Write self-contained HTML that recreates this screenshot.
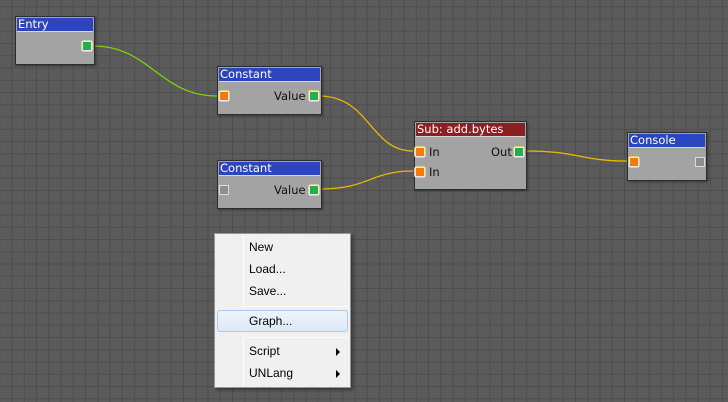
<!DOCTYPE html>
<html><head><meta charset="utf-8"><style>
*{margin:0;padding:0;box-sizing:border-box}
body{width:728px;height:402px;overflow:hidden;position:relative;font-family:"DejaVu Sans","Liberation Sans",sans-serif;
background-color:#5b5b5b;
background-image:linear-gradient(90deg,#4e4e4e 1px,transparent 1px),linear-gradient(#4e4e4e 1px,transparent 1px);
background-size:12.25px 12.25px;background-position:11.5px 6.25px}
.node{position:absolute;background:#a3a3a3;border:1px solid #2e2e2e;box-shadow:1px 1px 2px rgba(0,0,0,.4)}
.t{height:14px;margin:1px 1px 0 1px;color:#fff;font-size:11.5px;line-height:13px;padding-left:1px;border-bottom:1px solid #d8d8d8;background:#2b45bf}
.t.r{background:#8c1f22}
.p{position:absolute;width:12px;height:12px;border-radius:3px;background:#c9dca0}
.p i{position:absolute;left:1px;top:1px;width:10px;height:10px;border:1px solid #e8e8e8;background:#22b04a}
.p.o i{background:#f47a0a}.p.y{background:#e2cf8f}.p.g{background:none}.p.g i{background:#8e8e8e;border-color:#ddd}
.l{position:absolute;font-size:11.5px;color:#111}
.menu{position:absolute;left:214px;top:233px;width:137px;height:155px;background:#f0f0f0;border:1px solid #979797;box-shadow:2px 2px 3px rgba(0,0,0,.4);font-family:"Liberation Sans","DejaVu Sans",sans-serif;font-size:12px;color:#000}
.menu .vl{position:absolute;left:28px;top:2px;bottom:2px;width:1px;background:#e2e2e2;border-right:1px solid #fff}
.mi{position:absolute;left:34px}
.sep{position:absolute;left:30px;right:2px;height:1px;background:#d7d7d7;border-bottom:1px solid #fff}
.hl{position:absolute;left:2px;right:2px;top:76px;height:22px;border:1px solid #aecbed;border-radius:3px;background:linear-gradient(#eef4fb,#dde9f7)}
.ar{position:absolute;right:10px;width:0;height:0;border-left:4px solid #000;border-top:4px solid transparent;border-bottom:4px solid transparent}
</style></head><body>
<svg width="728" height="402" style="position:absolute;left:0;top:0">
<path d="M93 46 C150 46,160 96,217 96" stroke="#7fd000" stroke-width="1.3" fill="none"/>
<path d="M319 96 C370 96,370 151,413 151" stroke="#e8b800" stroke-width="1.3" fill="none"/>
<path d="M319 189 C370 189,370 171,413 171" stroke="#e8b800" stroke-width="1.3" fill="none"/>
<path d="M524 151 C580 151,580 161,627 161" stroke="#e8b800" stroke-width="1.3" fill="none"/>
</svg>
<div class="node" style="left:15px;top:16px;width:80px;height:49px"><div class="t">Entry</div>
<div class="p" style="left:65px;top:23px"><i></i></div></div>

<div class="node" style="left:217px;top:66px;width:105px;height:49px"><div class="t">Constant</div>
<div class="p o" style="left:0px;top:23px"><i></i></div>
<div class="l" style="left:56px;top:22px">Value</div>
<div class="p y" style="left:90px;top:23px"><i></i></div></div>

<div class="node" style="left:217px;top:160px;width:105px;height:49px"><div class="t">Constant</div>
<div class="p g" style="left:0px;top:23px"><i></i></div>
<div class="l" style="left:56px;top:22px">Value</div>
<div class="p y" style="left:90px;top:23px"><i></i></div></div>

<div class="node" style="left:414px;top:121px;width:113px;height:69px"><div class="t r">Sub: add.bytes</div>
<div class="p o y" style="left:-1px;top:24px"><i></i></div>
<div class="l" style="left:14px;top:23px">In</div>
<div class="p o y" style="left:-1px;top:44px"><i></i></div>
<div class="l" style="left:14px;top:43px">In</div>
<div class="l" style="left:76px;top:23px">Out</div>
<div class="p y" style="left:98px;top:24px"><i></i></div></div>

<div class="node" style="left:627px;top:132px;width:80px;height:49px"><div class="t">Console</div>
<div class="p o y" style="left:0px;top:23px"><i></i></div>
<div class="p g" style="left:66px;top:23px"><i></i></div></div>

<div class="menu"><div class="vl"></div>
<div class="mi" style="top:6px">New</div>
<div class="mi" style="top:28px">Load...</div>
<div class="mi" style="top:50px">Save...</div>
<div class="sep" style="top:72px"></div>
<div class="hl"></div>
<div class="mi" style="top:80px">Graph...</div>
<div class="sep" style="top:103px"></div>
<div class="mi" style="top:110px">Script</div><div class="ar" style="top:114px"></div>
<div class="mi" style="top:132px">UNLang</div><div class="ar" style="top:136px"></div>
</div>
</body></html>
